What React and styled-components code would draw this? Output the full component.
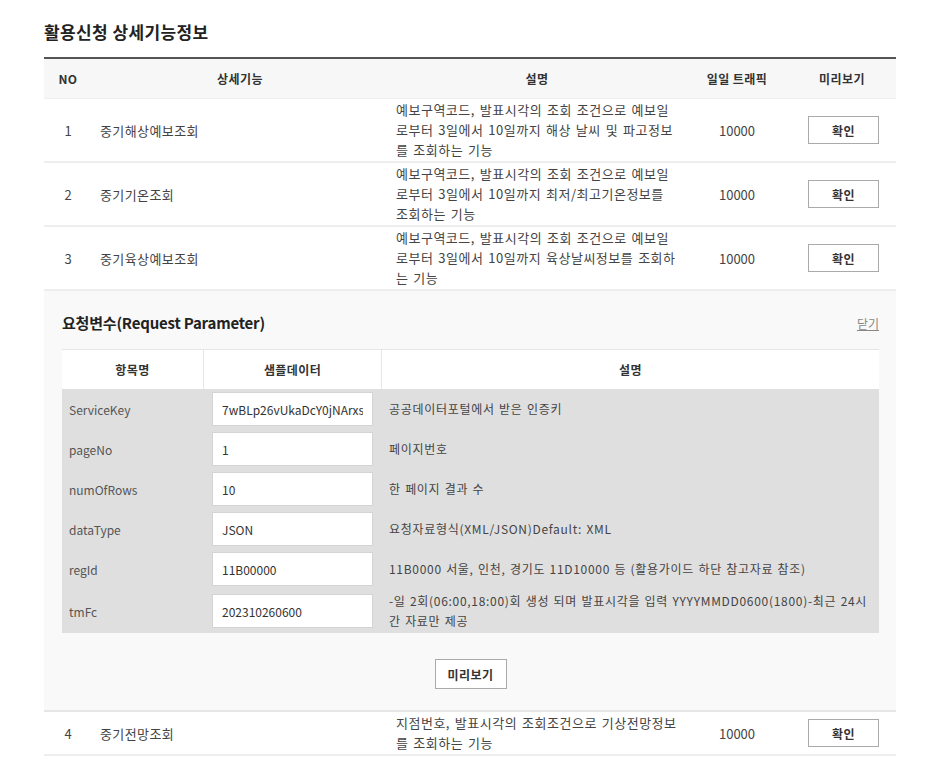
import React, { useState } from 'react';
import styled, { createGlobalStyle } from 'styled-components';

const GlobalStyle = createGlobalStyle`
  body {
    margin: 0;
    background: #fff;
    font-family: "Noto Sans CJK KR", "Noto Sans", sans-serif;
    color: #333;
  }
`;

const Page = styled.div`
  width: 852px;
  padding: 21px 0 0 44px;
`;

const Title = styled.h2`
  margin: 0 0 14px;
  font-size: 17px;
  line-height: 22px;
  font-weight: 700;
  color: #222;
  letter-spacing: 0.4px;
`;

const Table = styled.div`
  border-top: 2px solid #555;
`;

const Cols = '48px 296px 298px 102px 108px';

const HeadRow = styled.div`
  display: grid;
  grid-template-columns: ${Cols};
  height: 39px;
  align-items: center;
  background: #f7f7f7;
  border-bottom: 1px solid #eee;
  font-size: 12px;
  font-weight: 700;
  color: #333;
  letter-spacing: 0.4px;
`;

const HeadCell = styled.div`
  text-align: center;
`;

const Row = styled.div`
  display: grid;
  grid-template-columns: ${Cols};
  min-height: ${(p) => p.$h || 62}px;
  align-items: center;
  border-bottom: 2px solid #eee;
  border-top: ${(p) => (p.$top ? '2px solid #e6e6e6' : 'none')};
  font-size: 13px;
  color: #444;
`;

const NoCell = styled.div`
  text-align: center;
`;

const NameCell = styled.div`
  padding-left: 8px;
  letter-spacing: 0.4px;
`;

const DescCell = styled.div`
  padding: 0 8px;
  line-height: 20px;
  color: #444;
  letter-spacing: 0.5px;
  word-spacing: 1.5px;
`;

const NumCell = styled.div`
  text-align: center;
`;

const BtnCell = styled.div`
  display: flex;
  justify-content: center;
  padding-left: 3px;
`;

const Button = styled.button`
  width: ${(p) => p.$w || 71}px;
  height: ${(p) => p.$h || 28}px;
  background: #fff;
  border: 1px solid #aaa;
  font-family: inherit;
  font-size: 12px;
  font-weight: 700;
  color: #333;
  cursor: pointer;
  padding: 0;
  letter-spacing: 0.4px;
`;

const Detail = styled.div`
  background: #f9f9f9;
  padding: 21px 17px 21px 18px;
`;

const DetailHead = styled.div`
  display: flex;
  justify-content: space-between;
  align-items: center;
  margin-bottom: 15px;
`;

const DetailTitle = styled.h3`
  margin: 0;
  font-size: 15px;
  line-height: 22px;
  font-weight: 700;
  color: #222;
  letter-spacing: -0.2px;
`;

const CloseLink = styled.a`
  font-size: 12px;
  color: #888;
  text-decoration: underline;
  cursor: pointer;
`;

const ParamTable = styled.div`
  border-top: 1px solid #e6e6e6;
`;

const PCols = '141px 178px 498px';

const PHead = styled.div`
  display: grid;
  grid-template-columns: ${PCols};
  height: 39px;
  background: #fff;
  font-size: 12px;
  font-weight: 700;
  color: #333;
  letter-spacing: 0.4px;
`;

const PHeadCell = styled.div`
  display: flex;
  align-items: center;
  justify-content: center;
  border-left: ${(p) => (p.$first ? 'none' : '1px solid #e6e6e6')};
`;

const PBody = styled.div`
  background: #dfdfdf;
`;

const PRow = styled.div`
  display: grid;
  grid-template-columns: ${PCols};
  min-height: 40px;
  align-items: center;
  font-size: 12px;
  color: #444;
`;

const PName = styled.div`
  padding-left: 7px;
  color: #555;
`;

const PInputWrap = styled.div`
  padding: 3px 8px 3px 9px;
`;

const PInput = styled.input`
  box-sizing: border-box;
  width: 161px;
  height: 34px;
  border: 1px solid #d4d4d4;
  background: #fff;
  padding: 0 9px;
  font-family: inherit;
  font-size: 12px;
  color: #333;
  outline: none;
`;

const PDesc = styled.div`
  padding: 2px 8px;
  line-height: 20px;
  color: #444;
  letter-spacing: 0.7px;
  word-spacing: 1px;
`;

const Center = styled.div`
  display: flex;
  justify-content: center;
  margin-top: 26px;
`;

const rows = [
  {
    no: 1,
    name: '중기해상예보조회',
    desc: '예보구역코드, 발표시각의 조회 조건으로 예보일로부터 3일에서 10일까지 해상 날씨 및 파고정보를 조회하는 기능',
  },
  {
    no: 2,
    name: '중기기온조회',
    desc: '예보구역코드, 발표시각의 조회 조건으로 예보일로부터 3일에서 10일까지 최저/최고기온정보를 조회하는 기능',
  },
  {
    no: 3,
    name: '중기육상예보조회',
    desc: '예보구역코드, 발표시각의 조회 조건으로 예보일로부터 3일에서 10일까지 육상날씨정보를 조회하는 기능',
  },
];

const params = [
  { name: 'ServiceKey', value: '7wBLp26vUkaDcY0jNArxs', desc: '공공데이터포털에서 받은 인증키' },
  { name: 'pageNo', value: '1', desc: '페이지번호' },
  { name: 'numOfRows', value: '10', desc: '한 페이지 결과 수' },
  { name: 'dataType', value: 'JSON', desc: '요청자료형식(XML/JSON)Default: XML' },
  { name: 'regId', value: '11B00000', desc: '11B0000 서울, 인천, 경기도 11D10000 등 (활용가이드 하단 참고자료 참조)' },
  {
    name: 'tmFc',
    value: '202310260600',
    desc: '-일 2회(06:00,18:00)회 생성 되며 발표시각을 입력 YYYYMMDD0600(1800)-최근 24시간 자료만 제공',
  },
];

function App() {
  const [values, setValues] = useState(params.map((p) => p.value));

  const handleChange = (i, v) => {
    const next = [...values];
    next[i] = v;
    setValues(next);
  };

  return (
    <Page>
      <GlobalStyle />
      <Title>활용신청 상세기능정보</Title>
      <Table>
        <HeadRow>
          <HeadCell>NO</HeadCell>
          <HeadCell>상세기능</HeadCell>
          <HeadCell>설명</HeadCell>
          <HeadCell>일일 트래픽</HeadCell>
          <HeadCell>미리보기</HeadCell>
        </HeadRow>
        {rows.map((r) => (
          <Row key={r.no}>
            <NoCell>{r.no}</NoCell>
            <NameCell>{r.name}</NameCell>
            <DescCell>{r.desc}</DescCell>
            <NumCell>10000</NumCell>
            <BtnCell>
              <Button>확인</Button>
            </BtnCell>
          </Row>
        ))}
        <Detail>
          <DetailHead>
            <DetailTitle>요청변수(Request Parameter)</DetailTitle>
            <CloseLink>닫기</CloseLink>
          </DetailHead>
          <ParamTable>
            <PHead>
              <PHeadCell $first>항목명</PHeadCell>
              <PHeadCell>샘플데이터</PHeadCell>
              <PHeadCell>설명</PHeadCell>
            </PHead>
            <PBody>
              {params.map((p, i) => (
                <PRow key={p.name}>
                  <PName>{p.name}</PName>
                  <PInputWrap>
                    <PInput value={values[i]} onChange={(e) => handleChange(i, e.target.value)} />
                  </PInputWrap>
                  <PDesc>{p.desc}</PDesc>
                </PRow>
              ))}
            </PBody>
          </ParamTable>
          <Center>
            <Button $w={72} $h={30}>미리보기</Button>
          </Center>
        </Detail>
        <Row $top $h={42}>
          <NoCell>4</NoCell>
          <NameCell>중기전망조회</NameCell>
          <DescCell>지점번호, 발표시각의 조회조건으로 기상전망정보를 조회하는 기능</DescCell>
          <NumCell>10000</NumCell>
          <BtnCell>
            <Button>확인</Button>
          </BtnCell>
        </Row>
      </Table>
    </Page>
  );
}

export default App;
